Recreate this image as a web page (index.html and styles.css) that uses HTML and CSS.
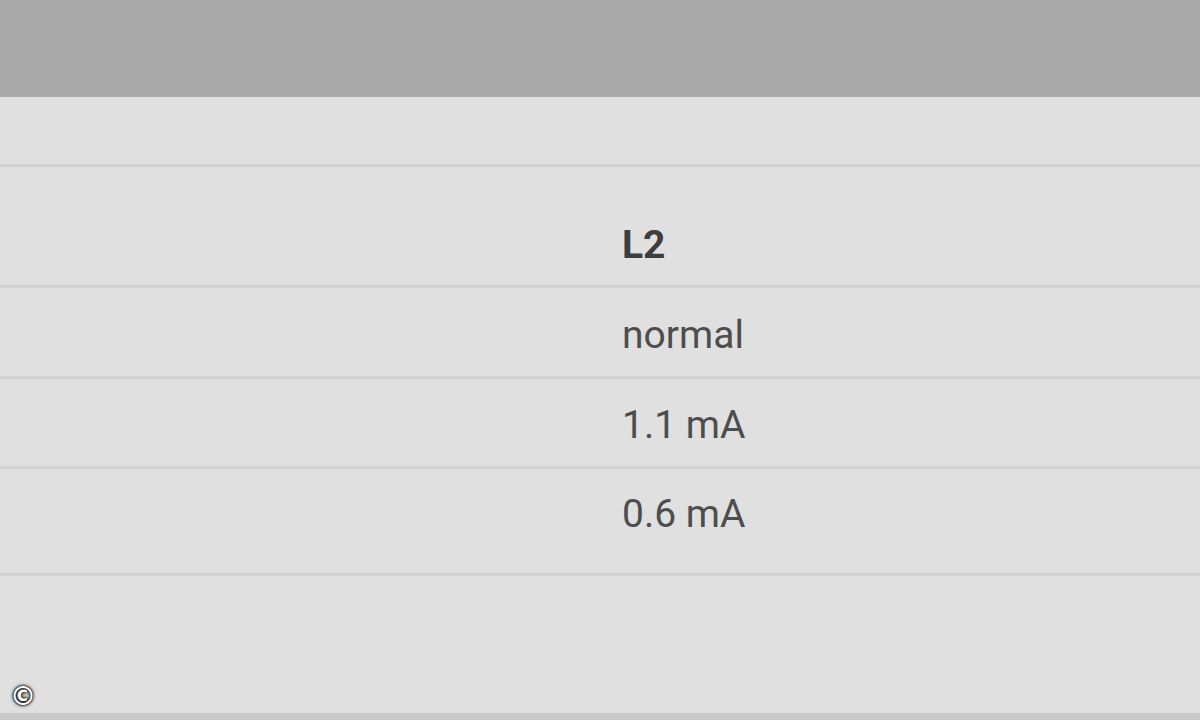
FILE: index.html
```html
<!DOCTYPE html>
<html>
<head>
<meta charset="utf-8">
<link rel="stylesheet" href="styles.css">
</head>
<body>
<div class="screen">
  <div class="topbar"></div>
  <div class="row row-blank"></div>
  <div class="row row-head"><span class="cell-label"></span><span class="cell-value bold">L2</span></div>
  <div class="row row-a"><span class="cell-label"></span><span class="cell-value">normal</span></div>
  <div class="row row-b"><span class="cell-label"></span><span class="cell-value">1.1 mA</span></div>
  <div class="row row-c"><span class="cell-label"></span><span class="cell-value">0.6 mA</span></div>
  <div class="filler"></div>
  <span class="copyright">©</span>
</div>
</body>
</html>
```

FILE: styles.css
```css
html, body {
  margin: 0;
  padding: 0;
  background: #e0e0e0;
}
.screen {
  position: relative;
  width: 1200px;
  height: 720px;
  display: flex;
  flex-direction: column;
  font-family: Roboto, "Liberation Sans", sans-serif;
  color: #4d4d4d;
  overflow: hidden;
}
.topbar {
  height: 97px;
  background: #aaaaaa;
  flex: none;
}
.row {
  flex: none;
  display: grid;
  grid-template-columns: 622px 1fr;
  align-items: start;
  border-bottom: 3px solid #d2d2d2;
  box-sizing: border-box;
  font-size: 39px;
  line-height: 46px;
}
.row-blank { height: 70px; }
.row-head { height: 121px; padding-top: 55px; }
.row-a { height: 91px; padding-top: 24px; }
.row-b { height: 90px; padding-top: 23px; }
.row-c { height: 107px; padding-top: 22px; }
.bold { font-weight: 700; color: #3e3e3e; }
.filler {
  flex: 1;
  border-bottom: 7px solid #c9c9c9;
}
.copyright {
  position: absolute;
  left: 10px;
  top: 683px;
  font-family: "DejaVu Sans", sans-serif;
  font-size: 26px;
  line-height: 26px;
  font-weight: 700;
  color: #ffffff;
  text-shadow: 0 0 1px #000, 0 0 2px #000, 0 0 3px #222, 0 0 4px #444;
}
```
